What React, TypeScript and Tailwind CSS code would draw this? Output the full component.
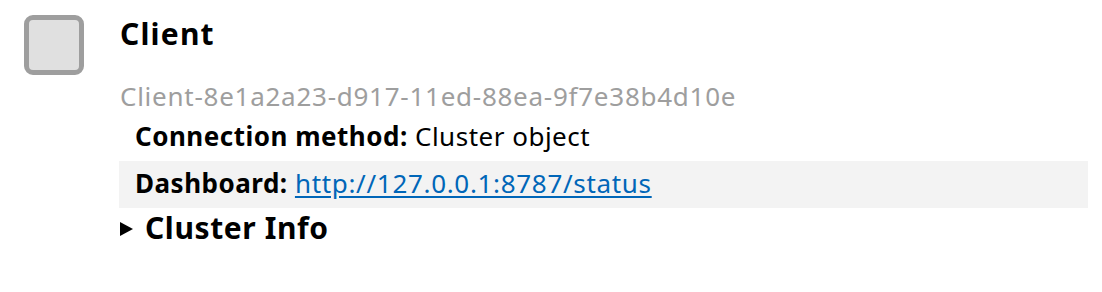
export default function App() {
  return (
    <div className="w-[1102px] h-[292px] bg-white" style={{ fontFamily: '"Noto Sans", sans-serif' }}>
      <div className="flex pt-[14px] pl-[24px] pr-[14px]">
        <div className="mt-[1px] w-[60px] h-[60px] shrink-0 rounded-[9px] border-[5px] border-[#9e9e9e] bg-[#e0e0e0]" />
        <div className="ml-[35px] flex-1">
          <div className="pl-[1px] text-[30px] leading-[40px] font-bold tracking-[1.2px] text-black">Client</div>
          <div className="pl-[1px] mt-[26px] text-[26px] leading-[32px] tracking-[0.74px] text-[#9e9e9e]">Client-8e1a2a23-d917-11ed-88ea-9f7e38b4d10e</div>
          <div className="px-[16px] pt-[8px] pb-[9px] text-[26px] leading-[32px] tracking-[0.5px] text-black">
            <span className="font-bold">Connection method:</span> Cluster object
          </div>
          <div className="px-[16px] pt-[6px] pb-[9px] text-[26px] leading-[32px] tracking-[0.5px] text-black bg-[#f3f3f3]">
            <span className="font-bold">Dashboard:</span>{" "}
            <a href="#" className="text-[#0066b8] underline underline-offset-[3px] tracking-[0.68px]">http://127.0.0.1:8787/status</a>
          </div>
          <div className="flex items-center text-[30px] leading-[40px] font-bold tracking-[0.6px] text-black">
            <svg width="14" height="14" viewBox="0 0 14 14" className="ml-[1px] mr-[11px] mt-[2px]">
              <path d="M0 0 L13 7 L0 14 Z" fill="black" />
            </svg>
            Cluster Info
          </div>
        </div>
      </div>
    </div>
  );
}
